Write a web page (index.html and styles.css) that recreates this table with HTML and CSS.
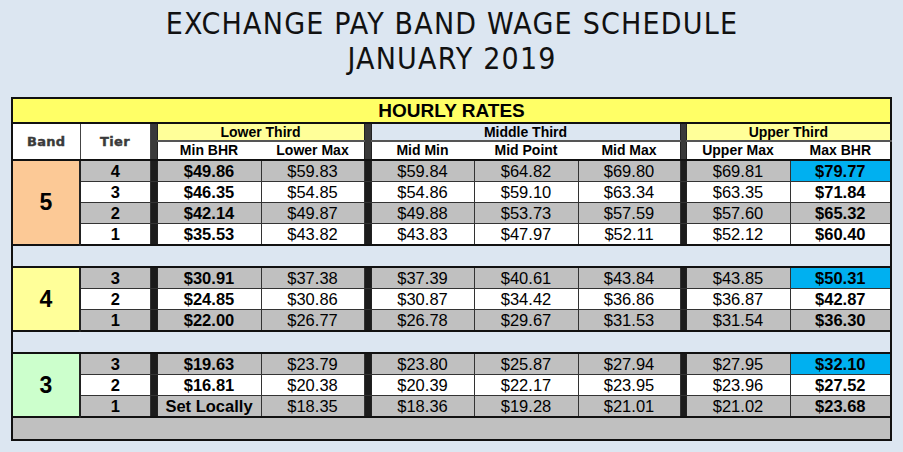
FILE: index.html
```html
<!DOCTYPE html>
<html lang="en">
<head>
<meta charset="utf-8">
<title>Exchange Pay Band Wage Schedule</title>
<link rel="stylesheet" href="styles.css">
</head>
<body>
<header class="title">
  <h1 class="title-line">EXCHANGE PAY BAND WAGE SCHEDULE</h1>
  <h2 class="title-line">JANUARY 2019</h2>
</header>
<table class="rates">
  <colgroup>
    <col class="w68"><col class="w70"><col class="w7">
    <col class="w104"><col class="w103"><col class="w7">
    <col class="w103"><col class="w104"><col class="w102"><col class="w6">
    <col class="w104"><col class="w101">
  </colgroup>
  <thead>
    <tr class="r-title"><th colspan="12" class="hourly">HOURLY RATES</th></tr>
    <tr class="r-group">
      <th rowspan="2" class="hd-band">Band</th>
      <th rowspan="2" class="hd-band">Tier</th>
      <th rowspan="2" class="hsep"></th>
      <th colspan="2" class="grp grp-y">Lower Third</th>
      <th rowspan="2" class="hsep"></th>
      <th colspan="3" class="grp grp-b">Middle Third</th>
      <th rowspan="2" class="hsep"></th>
      <th colspan="2" class="grp grp-y">Upper Third</th>
    </tr>
    <tr class="r-sub">
      <th>Min BHR</th><th>Lower Max</th>
      <th>Mid Min</th><th>Mid Point</th><th>Mid Max</th>
      <th>Upper Max</th><th>Max BHR</th>
    </tr>
  </thead>
  <tbody class="band">
    <tr class="g"><td rowspan="4" class="bandno b5">5</td><td class="tier">4</td><td class="sep"></td><td class="bold">$49.86</td><td>$59.83</td><td class="sep"></td><td>$59.84</td><td>$64.82</td><td>$69.80</td><td class="sep"></td><td>$69.81</td><td class="bold hi">$79.77</td></tr>
    <tr><td class="tier">3</td><td class="sep"></td><td class="bold">$46.35</td><td>$54.85</td><td class="sep"></td><td>$54.86</td><td>$59.10</td><td>$63.34</td><td class="sep"></td><td>$63.35</td><td class="bold">$71.84</td></tr>
    <tr class="g"><td class="tier">2</td><td class="sep"></td><td class="bold">$42.14</td><td>$49.87</td><td class="sep"></td><td>$49.88</td><td>$53.73</td><td>$57.59</td><td class="sep"></td><td>$57.60</td><td class="bold">$65.32</td></tr>
    <tr><td class="tier">1</td><td class="sep"></td><td class="bold">$35.53</td><td>$43.82</td><td class="sep"></td><td>$43.83</td><td>$47.97</td><td>$52.11</td><td class="sep"></td><td>$52.12</td><td class="bold">$60.40</td></tr>
  </tbody>
  <tbody class="gap"><tr><td colspan="12" class="spacer"></td></tr></tbody>
  <tbody class="band">
    <tr class="g"><td rowspan="3" class="bandno b4">4</td><td class="tier">3</td><td class="sep"></td><td class="bold">$30.91</td><td>$37.38</td><td class="sep"></td><td>$37.39</td><td>$40.61</td><td>$43.84</td><td class="sep"></td><td>$43.85</td><td class="bold hi">$50.31</td></tr>
    <tr><td class="tier">2</td><td class="sep"></td><td class="bold">$24.85</td><td>$30.86</td><td class="sep"></td><td>$30.87</td><td>$34.42</td><td>$36.86</td><td class="sep"></td><td>$36.87</td><td class="bold">$42.87</td></tr>
    <tr class="g"><td class="tier">1</td><td class="sep"></td><td class="bold">$22.00</td><td>$26.77</td><td class="sep"></td><td>$26.78</td><td>$29.67</td><td>$31.53</td><td class="sep"></td><td>$31.54</td><td class="bold">$36.30</td></tr>
  </tbody>
  <tbody class="gap"><tr><td colspan="12" class="spacer"></td></tr></tbody>
  <tbody class="band">
    <tr class="g"><td rowspan="3" class="bandno b3">3</td><td class="tier">3</td><td class="sep"></td><td class="bold">$19.63</td><td>$23.79</td><td class="sep"></td><td>$23.80</td><td>$25.87</td><td>$27.94</td><td class="sep"></td><td>$27.95</td><td class="bold hi">$32.10</td></tr>
    <tr><td class="tier">2</td><td class="sep"></td><td class="bold">$16.81</td><td>$20.38</td><td class="sep"></td><td>$20.39</td><td>$22.17</td><td>$23.95</td><td class="sep"></td><td>$23.96</td><td class="bold">$27.52</td></tr>
    <tr class="g"><td class="tier">1</td><td class="sep"></td><td class="bold">Set Locally</td><td>$18.35</td><td class="sep"></td><td>$18.36</td><td>$19.28</td><td>$21.01</td><td class="sep"></td><td>$21.02</td><td class="bold">$23.68</td></tr>
  </tbody>
  <tfoot><tr><td colspan="12" class="footer"></td></tr></tfoot>
</table>
</body>
</html>
```

FILE: styles.css
```css
html, body {
  margin: 0;
  padding: 0;
  background: #dce6f1;
}

body {
  font-family: "Liberation Sans", Arial, sans-serif;
  color: #000;
}

.title {
  height: 97px;
  padding-top: 6px;
  box-sizing: border-box;
  text-align: center;
}

.title-line {
  margin: 0;
  font-family: "DejaVu Sans Condensed", "DejaVu Sans", sans-serif;
  font-stretch: condensed;
  font-weight: normal;
  font-size: 30px;
  line-height: 35px;
  letter-spacing: 1.2px;
  color: #111;
  padding-left: 1px;
}

.rates {
  margin-left: 11px;
  width: 881px;
  border-collapse: collapse;
  table-layout: fixed;
  border: 2px solid #111;
}

.w68 { width: 68px; }
.w70 { width: 70px; }
.w7 { width: 7px; }
.w6 { width: 6px; }
.w101 { width: 101px; }
.w102 { width: 102px; }
.w103 { width: 103px; }
.w104 { width: 104px; }

.rates th, .rates td {
  padding: 0;
  text-align: center;
  white-space: nowrap;
  overflow: hidden;
}

.rates td {
  border: 1px solid #333;
  height: 20px;
  font-size: 16.5px;
  line-height: 19px;
  background: #fff;
}

.rates tr.g td { background: #c0c0c0; }

.rates td.bold, .rates td.tier { font-weight: bold; }
.rates tr td.hi { background: #00b0f0; }

.r-title th.hourly {
  background: #ffff66;
  height: 23px;
  font-size: 19px;
  line-height: 23px;
  font-weight: bold;
  border-bottom: 2px solid #111;
}

.rates thead th {
  font-weight: bold;
}

.r-group th { height: 16px; }

.hd-band {
  background: #fff;
  border: 1px solid #444;
  border-bottom: 2px solid #111;
  font-family: "DejaVu Sans", sans-serif;
  font-size: 13px;
  color: #3a3a3a;
  -webkit-text-stroke: 0.4px #3a3a3a;
  letter-spacing: 0.3px;
}

.grp {
  font-size: 14px;
  line-height: 16px;
  border-bottom: 2px solid #555;
}

.grp-y { background: #ffff99; }
.grp-b { background: #dce6f1; }

.r-sub th {
  background: #fff;
  font-size: 14px;
  line-height: 17px;
  height: 17px;
  border-bottom: 2px solid #111;
  border-left: 1px solid #fff;
}

.rates tr td.sep {
  background: #1c1c1c;
  border-left: 1px solid #222;
  border-right: 1px solid #222;
}

.rates thead th.hsep {
  background: #3a3a3a;
  border-left: 1px solid #222;
  border-right: 1px solid #222;
  border-bottom: 2px solid #111;
}

.rates tr td.bandno {
  font-size: 23px;
  font-weight: bold;
  border-right: 2px solid #222;
}

.rates tr td.b5 { background: #fcc996; }
.rates tr td.b4 { background: #ffff99; }
.rates tr td.b3 { background: #ccffcc; }

.band { border-bottom: 2px solid #111; }
.gap + .band { border-top: 2px solid #111; }

.rates td.spacer {
  background: #dce6f1;
  height: 20px;
  border: 2px solid #111;
}

.rates td.footer {
  background: #c0c0c0;
  height: 21px;
  border-top: 2px solid #111;
}
```
